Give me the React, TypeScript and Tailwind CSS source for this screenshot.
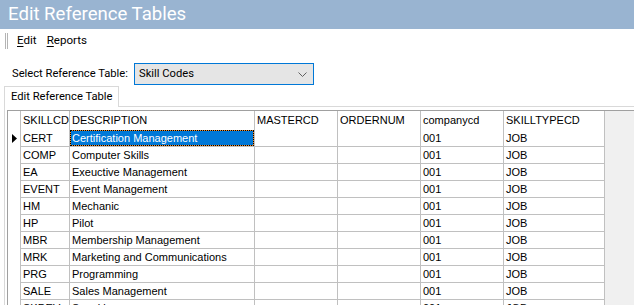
import { FC } from "react";

type Row = {
  code: string;
  desc: string;
  company: string;
  type: string;
};

const rows: Row[] = [
  { code: "CERT", desc: "Certification Management", company: "001", type: "JOB" },
  { code: "COMP", desc: "Computer Skills", company: "001", type: "JOB" },
  { code: "EA", desc: "Exeuctive Management", company: "001", type: "JOB" },
  { code: "EVENT", desc: "Event Management", company: "001", type: "JOB" },
  { code: "HM", desc: "Mechanic", company: "001", type: "JOB" },
  { code: "HP", desc: "Pilot", company: "001", type: "JOB" },
  { code: "MBR", desc: "Membership Management", company: "001", type: "JOB" },
  { code: "MRK", desc: "Marketing and Communications", company: "001", type: "JOB" },
  { code: "PRG", desc: "Programming", company: "001", type: "JOB" },
  { code: "SALE", desc: "Sales Management", company: "001", type: "JOB" },
  { code: "SKDEV", desc: "Speaking", company: "001", type: "JOB" },
];

const line = "h-full border-r border-[#c0c0c0]";
const cell = `${line} pl-[2px] truncate`;

const RowArrow: FC = () => (
  <svg width="5" height="9" viewBox="0 0 5 9">
    <path d="M0 0 L5 4.5 L0 9 Z" fill="#000" />
  </svg>
);

const Grid: FC = () => {
  return (
    <div className="flex border-t border-l border-[#a0a0a0] bg-[#f0f0f0] h-[200px] font-['Liberation_Sans',Arial,sans-serif] text-[11px] text-black">
      <div className="bg-white">
        {/* header */}
        <div className="flex h-[19px] leading-[19px]">
          <div className={`w-[13px] ${line}`} />
          <div className={`w-[49px] ${cell}`}>SKILLCD</div>
          <div className={`w-[185px] ${cell}`}>DESCRIPTION</div>
          <div className={`w-[83px] ${cell}`}>MASTERCD</div>
          <div className={`w-[83px] ${cell}`}>ORDERNUM</div>
          <div className={`w-[83px] ${cell}`}>companycd</div>
          <div className={`w-[101px] ${cell}`}>SKILLTYPECD</div>
        </div>
        {rows.map((r, i) => (
          <div key={r.code} className="flex h-[17px] leading-[16px]">
            <div className={`w-[13px] ${line} flex items-center pl-[4px]`}>
              {i === 0 && <RowArrow />}
            </div>
            <div className={`w-[49px] border-b ${cell}`}>{r.code}</div>
            {i === 0 ? (
              <div className={`w-[185px] border-b ${line}`}>
                <div className="h-full bg-[#0078d7] text-white pl-[1px] border border-[#f08c28] outline-1 outline-dotted outline-black -outline-offset-1 leading-[14px] truncate">
                  {r.desc}
                </div>
              </div>
            ) : (
              <div className={`w-[185px] border-b ${cell}`}>{r.desc}</div>
            )}
            <div className={`w-[83px] border-b ${cell}`} />
            <div className={`w-[83px] border-b ${cell}`} />
            <div className={`w-[83px] border-b ${cell}`}>{r.company}</div>
            <div className={`w-[101px] border-b ${cell}`}>{r.type}</div>
          </div>
        ))}
      </div>
      <div className="flex-1" />
    </div>
  );
};

const App: FC = () => {
  return (
    <div className="w-[634px] h-[305px] overflow-hidden bg-white font-['Roboto',sans-serif] text-[11.2px] text-black">
      {/* title bar */}
      <div className="h-[29px] bg-[#99b4d1] pl-[8px] flex items-center text-white text-[18.6px]">
        Edit Reference Tables
      </div>

      {/* menu */}
      <div className="h-[24px] flex items-center whitespace-nowrap">
        <div className="ml-[5px] flex gap-[1px] h-[16px]">
          <div className="w-px h-full bg-[#b4b4b4]" />
          <div className="w-px h-full bg-[#b4b4b4]" />
        </div>
        <span className="ml-[9px] text-[11.6px]">
          <span className="underline underline-offset-2">E</span>dit
        </span>
        <span className="ml-[10px] text-[11.6px]">
          <span className="underline underline-offset-2">R</span>eports
        </span>
      </div>

      {/* selector */}
      <div className="mt-[10px] flex items-center pl-[12px] h-[22px] whitespace-nowrap">
        <span className="w-[122px]">Select Reference Table:</span>
        <div className="w-[180px] h-[22px] border border-[#0078d7] bg-[#e5e5e5] flex items-center justify-between pl-[4px] pr-[6px]">
          <span>Skill Codes</span>
          <svg width="9" height="5" viewBox="0 0 9 5">
            <path d="M0.5 0.5 L4.5 4.5 L8.5 0.5" fill="none" stroke="#606060" strokeWidth="1" />
          </svg>
        </div>
      </div>

      {/* tabs */}
      <div className="mt-[1px] flex h-[21px] pl-[4px] whitespace-nowrap">
        <div className="w-[115px] h-full border-t border-l border-r border-[#d9d9d9] pl-[6px] flex items-center">
          Edit Reference Table
        </div>
        <div className="flex-1 border-b border-[#d9d9d9]" />
      </div>

      {/* tab page */}
      <div className="ml-[4px] border-l border-[#d9d9d9] pt-[3px] pl-[2px]">
        <Grid />
      </div>
    </div>
  );
};

export default App;
